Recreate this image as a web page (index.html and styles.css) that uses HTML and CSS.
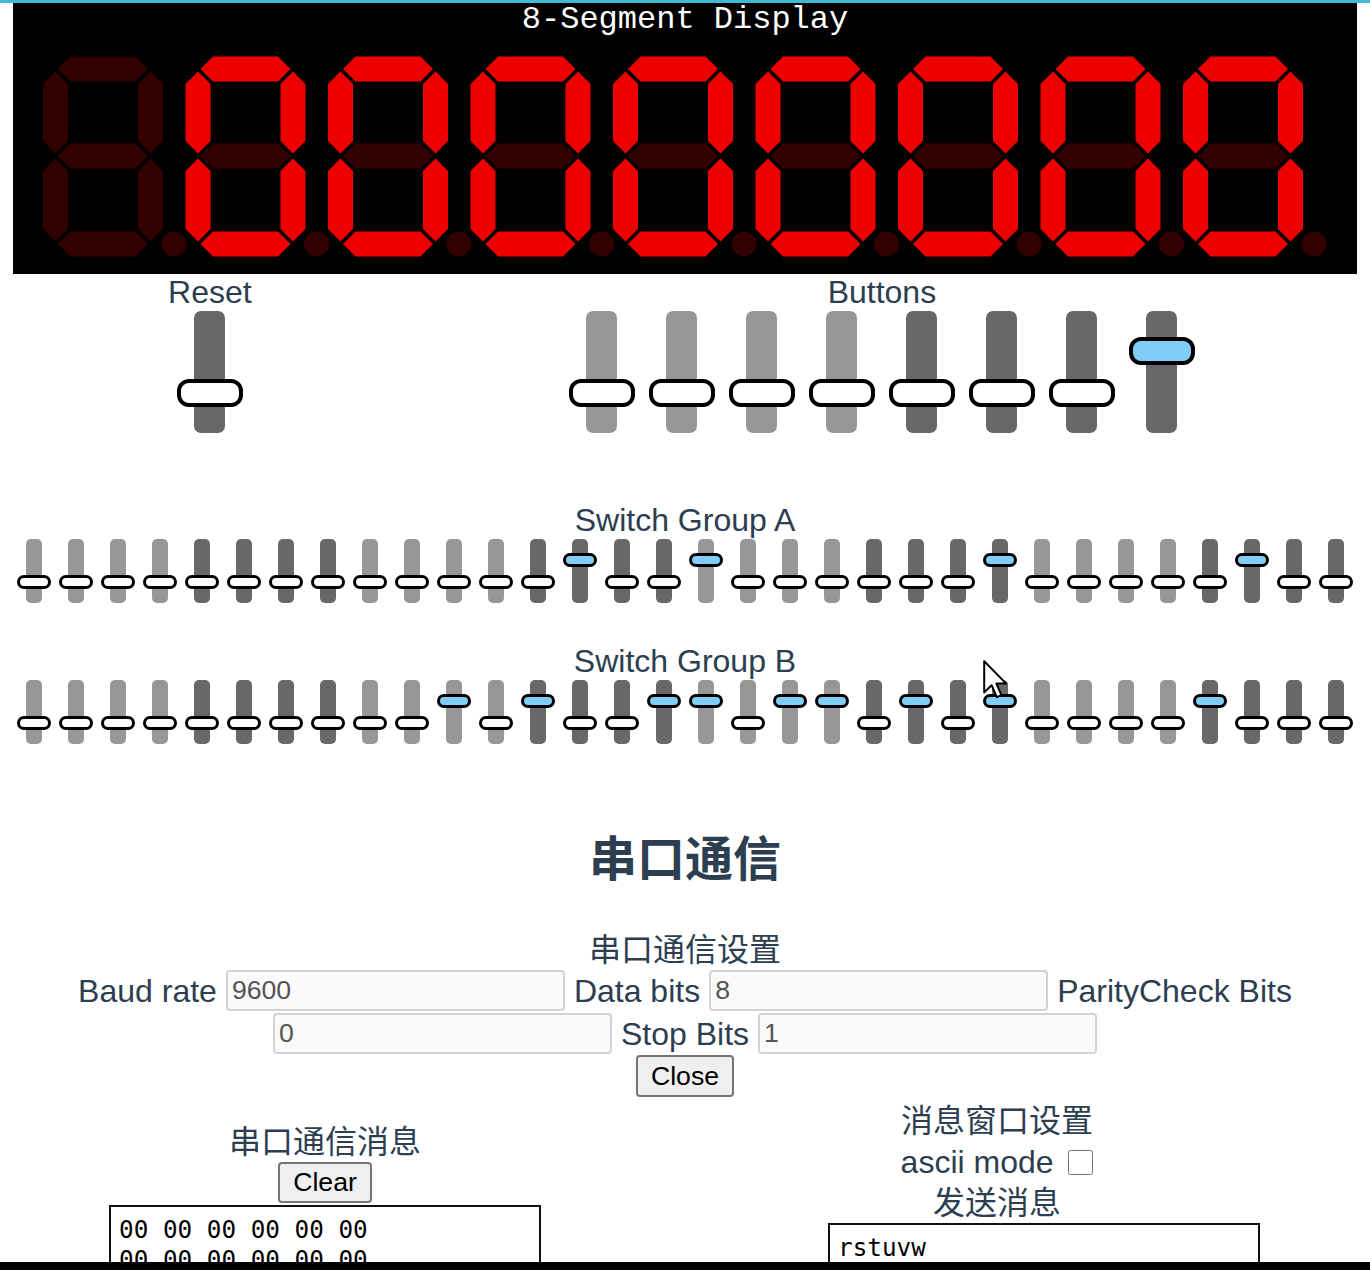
FILE: index.html
```html
<!DOCTYPE html>
<html lang="zh-CN">
<head>
<meta charset="utf-8">
<title>8-Segment Display</title>
<link rel="stylesheet" href="styles.css">
</head>
<body>
<div class="topbar"></div>
<main class="app">
  <section class="display">
    <div class="display-title">8-Segment Display</div>
    <svg class="digits" width="1344" height="239" viewBox="0 0 1344 239">
      <defs>
        <polygon id="sa" points="15,13 27.5,0.5 92.5,0.5 105,13 92.5,25.5 27.5,25.5"/>
        <polygon id="sg" points="15,100 27.5,87.5 92.5,87.5 105,100 92.5,112.5 27.5,112.5"/>
        <polygon id="sd" points="15,188 27.5,175.5 92.5,175.5 105,188 92.5,200.5 27.5,200.5"/>
        <polygon id="sf" points="12.5,15.5 25,28 25,85 12.5,97.5 0,85 0,28"/>
        <polygon id="se" points="12.5,102.5 25,115 25,173 12.5,185.5 0,173 0,115"/>
        <polygon id="sb" points="107.5,15.5 120,28 120,85 107.5,97.5 95,85 95,28"/>
        <polygon id="sc" points="107.5,102.5 120,115 120,173 107.5,185.5 95,173 95,115"/>
        <circle id="sp" cx="131" cy="188" r="12.5"/>
      </defs>
      <g transform="translate(30,21)">
        <use href="#sa" class="off"/><use href="#sb" class="off"/><use href="#sc" class="off"/><use href="#sd" class="off"/><use href="#se" class="off"/><use href="#sf" class="off"/><use href="#sg" class="off"/><use href="#sp" class="off"/>
      </g>
      <g transform="translate(172.5,21)">
        <use href="#sa" class="on"/><use href="#sb" class="on"/><use href="#sc" class="on"/><use href="#sd" class="on"/><use href="#se" class="on"/><use href="#sf" class="on"/><use href="#sg" class="off"/><use href="#sp" class="off"/>
      </g>
      <g transform="translate(315,21)">
        <use href="#sa" class="on"/><use href="#sb" class="on"/><use href="#sc" class="on"/><use href="#sd" class="on"/><use href="#se" class="on"/><use href="#sf" class="on"/><use href="#sg" class="off"/><use href="#sp" class="off"/>
      </g>
      <g transform="translate(457.5,21)">
        <use href="#sa" class="on"/><use href="#sb" class="on"/><use href="#sc" class="on"/><use href="#sd" class="on"/><use href="#se" class="on"/><use href="#sf" class="on"/><use href="#sg" class="off"/><use href="#sp" class="off"/>
      </g>
      <g transform="translate(600,21)">
        <use href="#sa" class="on"/><use href="#sb" class="on"/><use href="#sc" class="on"/><use href="#sd" class="on"/><use href="#se" class="on"/><use href="#sf" class="on"/><use href="#sg" class="off"/><use href="#sp" class="off"/>
      </g>
      <g transform="translate(742.5,21)">
        <use href="#sa" class="on"/><use href="#sb" class="on"/><use href="#sc" class="on"/><use href="#sd" class="on"/><use href="#se" class="on"/><use href="#sf" class="on"/><use href="#sg" class="off"/><use href="#sp" class="off"/>
      </g>
      <g transform="translate(885,21)">
        <use href="#sa" class="on"/><use href="#sb" class="on"/><use href="#sc" class="on"/><use href="#sd" class="on"/><use href="#se" class="on"/><use href="#sf" class="on"/><use href="#sg" class="off"/><use href="#sp" class="off"/>
      </g>
      <g transform="translate(1027.5,21)">
        <use href="#sa" class="on"/><use href="#sb" class="on"/><use href="#sc" class="on"/><use href="#sd" class="on"/><use href="#se" class="on"/><use href="#sf" class="on"/><use href="#sg" class="off"/><use href="#sp" class="off"/>
      </g>
      <g transform="translate(1170,21)">
        <use href="#sa" class="on"/><use href="#sb" class="on"/><use href="#sc" class="on"/><use href="#sd" class="on"/><use href="#se" class="on"/><use href="#sf" class="on"/><use href="#sg" class="off"/><use href="#sp" class="off"/>
      </g>
    </svg>
  </section>

  <section class="controls">
    <div class="ctl-group">
      <div class="label">Reset</div>
      <div class="slider-row">
        <div class="slider"><div class="track dark"></div><div class="knob"></div></div>
      </div>
    </div>
    <div class="ctl-group">
      <div class="label">Buttons</div>
      <div class="slider-row">
        <div class="slider"><div class="track light"></div><div class="knob"></div></div>
        <div class="slider"><div class="track light"></div><div class="knob"></div></div>
        <div class="slider"><div class="track light"></div><div class="knob"></div></div>
        <div class="slider"><div class="track light"></div><div class="knob"></div></div>
        <div class="slider"><div class="track dark"></div><div class="knob"></div></div>
        <div class="slider"><div class="track dark"></div><div class="knob"></div></div>
        <div class="slider"><div class="track dark"></div><div class="knob"></div></div>
        <div class="slider"><div class="track dark"></div><div class="knob on"></div></div>
      </div>
    </div>
  </section>

  <section class="switch-group first">
    <div class="label">Switch Group A</div>
    <div class="switches">
      <div class="switch"><div class="track light"></div><div class="knob"></div></div>
      <div class="switch"><div class="track light"></div><div class="knob"></div></div>
      <div class="switch"><div class="track light"></div><div class="knob"></div></div>
      <div class="switch"><div class="track light"></div><div class="knob"></div></div>
      <div class="switch"><div class="track dark"></div><div class="knob"></div></div>
      <div class="switch"><div class="track dark"></div><div class="knob"></div></div>
      <div class="switch"><div class="track dark"></div><div class="knob"></div></div>
      <div class="switch"><div class="track dark"></div><div class="knob"></div></div>
      <div class="switch"><div class="track light"></div><div class="knob"></div></div>
      <div class="switch"><div class="track light"></div><div class="knob"></div></div>
      <div class="switch"><div class="track light"></div><div class="knob"></div></div>
      <div class="switch"><div class="track light"></div><div class="knob"></div></div>
      <div class="switch"><div class="track dark"></div><div class="knob"></div></div>
      <div class="switch"><div class="track dark"></div><div class="knob on"></div></div>
      <div class="switch"><div class="track dark"></div><div class="knob"></div></div>
      <div class="switch"><div class="track dark"></div><div class="knob"></div></div>
      <div class="switch"><div class="track light"></div><div class="knob on"></div></div>
      <div class="switch"><div class="track light"></div><div class="knob"></div></div>
      <div class="switch"><div class="track light"></div><div class="knob"></div></div>
      <div class="switch"><div class="track light"></div><div class="knob"></div></div>
      <div class="switch"><div class="track dark"></div><div class="knob"></div></div>
      <div class="switch"><div class="track dark"></div><div class="knob"></div></div>
      <div class="switch"><div class="track dark"></div><div class="knob"></div></div>
      <div class="switch"><div class="track dark"></div><div class="knob on"></div></div>
      <div class="switch"><div class="track light"></div><div class="knob"></div></div>
      <div class="switch"><div class="track light"></div><div class="knob"></div></div>
      <div class="switch"><div class="track light"></div><div class="knob"></div></div>
      <div class="switch"><div class="track light"></div><div class="knob"></div></div>
      <div class="switch"><div class="track dark"></div><div class="knob"></div></div>
      <div class="switch"><div class="track dark"></div><div class="knob on"></div></div>
      <div class="switch"><div class="track dark"></div><div class="knob"></div></div>
      <div class="switch"><div class="track dark"></div><div class="knob"></div></div>
    </div>
  </section>

  <section class="switch-group">
    <div class="label">Switch Group B</div>
    <div class="switches">
      <div class="switch"><div class="track light"></div><div class="knob"></div></div>
      <div class="switch"><div class="track light"></div><div class="knob"></div></div>
      <div class="switch"><div class="track light"></div><div class="knob"></div></div>
      <div class="switch"><div class="track light"></div><div class="knob"></div></div>
      <div class="switch"><div class="track dark"></div><div class="knob"></div></div>
      <div class="switch"><div class="track dark"></div><div class="knob"></div></div>
      <div class="switch"><div class="track dark"></div><div class="knob"></div></div>
      <div class="switch"><div class="track dark"></div><div class="knob"></div></div>
      <div class="switch"><div class="track light"></div><div class="knob"></div></div>
      <div class="switch"><div class="track light"></div><div class="knob"></div></div>
      <div class="switch"><div class="track light"></div><div class="knob on"></div></div>
      <div class="switch"><div class="track light"></div><div class="knob"></div></div>
      <div class="switch"><div class="track dark"></div><div class="knob on"></div></div>
      <div class="switch"><div class="track dark"></div><div class="knob"></div></div>
      <div class="switch"><div class="track dark"></div><div class="knob"></div></div>
      <div class="switch"><div class="track dark"></div><div class="knob on"></div></div>
      <div class="switch"><div class="track light"></div><div class="knob on"></div></div>
      <div class="switch"><div class="track light"></div><div class="knob"></div></div>
      <div class="switch"><div class="track light"></div><div class="knob on"></div></div>
      <div class="switch"><div class="track light"></div><div class="knob on"></div></div>
      <div class="switch"><div class="track dark"></div><div class="knob"></div></div>
      <div class="switch"><div class="track dark"></div><div class="knob on"></div></div>
      <div class="switch"><div class="track dark"></div><div class="knob"></div></div>
      <div class="switch"><div class="track dark"></div><div class="knob on"></div></div>
      <div class="switch"><div class="track light"></div><div class="knob"></div></div>
      <div class="switch"><div class="track light"></div><div class="knob"></div></div>
      <div class="switch"><div class="track light"></div><div class="knob"></div></div>
      <div class="switch"><div class="track light"></div><div class="knob"></div></div>
      <div class="switch"><div class="track dark"></div><div class="knob on"></div></div>
      <div class="switch"><div class="track dark"></div><div class="knob"></div></div>
      <div class="switch"><div class="track dark"></div><div class="knob"></div></div>
      <div class="switch"><div class="track dark"></div><div class="knob"></div></div>
    </div>
  </section>

  <section class="serial">
    <h2 class="serial-title">串口通信</h2>
    <div class="settings">
      <div class="label">串口通信设置</div>
      <div class="form-row">
        <span>Baud rate</span><input class="field" value="9600" readonly>
        <span>Data bits</span><input class="field" value="8" readonly>
        <span>ParityCheck Bits</span>
      </div>
      <div class="form-row">
        <input class="field" value="0" readonly>
        <span>Stop Bits</span><input class="field" value="1" readonly>
      </div>
      <div class="form-row short">
        <button class="btn close">Close</button>
      </div>
    </div>

    <div class="io">
      <div class="io-col left">
        <div class="label">串口通信消息</div>
        <button class="btn clear">Clear</button>
        <textarea class="log" readonly>00 00 00 00 00 00
00 00 00 00 00 00
00 00 00 00 00 00</textarea>
      </div>
      <div class="io-col right">
        <div class="label">消息窗口设置</div>
        <label class="ascii">ascii mode <input type="checkbox" class="check"></label>
        <div class="label">发送消息</div>
        <textarea class="send">rstuvw</textarea>
      </div>
    </div>
  </section>
</main>

<svg class="cursor" width="26" height="40" viewBox="0 0 13 20">
  <path d="M0.6 0.6 V16.2 L4.3 12.6 L6.9 18.6 L9.2 17.6 L6.7 11.8 L11.6 11.8 Z" fill="#fff" stroke="#000" stroke-width="1" stroke-linejoin="round"/>
</svg>
<div class="bottom-band"></div>
</body>
</html>
```

FILE: styles.css
```css
* { box-sizing: border-box; }

html, body {
  margin: 0;
  padding: 0;
  background: #fff;
  overflow: hidden;
}

body {
  font-family: "Liberation Sans", Arial, "Noto Sans CJK SC", sans-serif;
  font-size: 32px;
  color: #2c3e50;
  position: relative;
  height: 1270px;
}

.topbar {
  height: 3px;
  background: #43b9d6;
}

.app {
  width: 1344px;
  margin-left: 13px;
}

/* ---------- display ---------- */
.display {
  background: #000;
  height: 271px;
}

.display-title {
  padding-top: 2px;
  font-family: "Liberation Mono", "DejaVu Sans Mono", monospace;
  font-size: 32px;
  line-height: 30px;
  color: #fff;
  text-align: center;
}

.digits { display: block; }
.digits .on { fill: #ef0000; }
.digits .off { fill: #330000; }

/* ---------- labels ---------- */
.label {
  line-height: 37px;
  text-align: center;
  white-space: nowrap;
}

/* ---------- reset / buttons ---------- */
.controls {
  display: flex;
  justify-content: space-around;
}

.ctl-group {
  display: flex;
  flex-direction: column;
  align-items: center;
}

.slider-row { display: flex; }

.slider {
  position: relative;
  width: 80px;
  height: 122px;
}

.slider .track {
  width: 31px;
  height: 122px;
  margin: 0 auto;
  border-radius: 7px;
}

.track.light { background: #979797; }
.track.dark { background: #686868; }

.slider .knob {
  position: absolute;
  left: 7px;
  top: 68px;
  width: 66px;
  height: 28px;
  border: 4px solid #000;
  border-radius: 12px;
  background: #fff;
}

.slider .knob.on {
  top: 26px;
  background: #80cdfa;
}

/* ---------- switch groups ---------- */
.switch-group { margin-top: 39px; }
.switch-group.first { margin-top: 68px; }
.switch-group .label { line-height: 38px; }

.switches { display: flex; }

.switch {
  position: relative;
  width: 42px;
  height: 64px;
}

.switch .track {
  width: 16px;
  height: 64px;
  margin: 0 auto;
  border-radius: 5px;
}

.switch .knob {
  position: absolute;
  left: 4px;
  top: 36px;
  width: 34px;
  height: 14px;
  border: 3px solid #000;
  border-radius: 7px;
  background: #fff;
}

.switch .knob.on {
  top: 14px;
  background: #80cdfa;
}

/* ---------- serial ---------- */
.serial-title {
  margin: 88px 0 0;
  font-size: 48px;
  line-height: 56px;
  font-weight: bold;
  text-align: center;
}

.settings { margin-top: 43px; }
.settings .label { line-height: 38px; }

.form-row {
  display: flex;
  justify-content: center;
  align-items: center;
  gap: 9px;
  height: 43px;
  line-height: 38px;
  white-space: nowrap;
}

.form-row.short { height: 42px; }

.field {
  width: 339px;
  height: 41px;
  margin: 0;
  padding: 0 4px;
  border: 2px solid #d3d3d3;
  border-radius: 4px;
  background: #fafafa;
  font-family: "Liberation Sans", Arial, sans-serif;
  font-size: 26.67px;
  color: #545454;
  outline: none;
}

.btn {
  margin: 0;
  padding: 0;
  border: 2px solid #767676;
  border-radius: 4px;
  background: #efefef;
  font-family: "Liberation Sans", Arial, sans-serif;
  font-size: 26.67px;
  color: #000;
  line-height: 1;
}

.btn.close { width: 98px; height: 42px; }
.btn.clear { width: 94px; height: 41px; margin-top: -1px; }

/* ---------- bottom io ---------- */
.io {
  display: grid;
  grid-template-columns: 624px 720px;
  align-items: start;
}

.io-col {
  display: flex;
  flex-direction: column;
  align-items: center;
}

.io .label { line-height: 41px; }

.io-col.left { padding-top: 25px; }
.io-col.right { padding-top: 4px; }

.ascii {
  display: flex;
  align-items: center;
  height: 41px;
  line-height: 41px;
  white-space: pre;
}

.check {
  width: 25px;
  height: 25px;
  margin: 0 0 0 6px;
}

.log, .send {
  display: block;
  width: 432px;
  margin: 0;
  padding: 8px 8px;
  border: 2px solid #111;
  border-radius: 0;
  background: #fff;
  font-family: "DejaVu Sans Mono", monospace;
  font-size: 24.3px;
  line-height: 30px;
  color: #000;
  resize: none;
  overflow: hidden;
  outline: none;
}

.log {
  height: 63px;
  margin-top: 2px;
}

.send {
  height: 46px;
  align-self: flex-start;
  margin-left: 191px;
  margin-top: -1px;
}

/* ---------- overlays ---------- */
.cursor {
  position: absolute;
  left: 983px;
  top: 660px;
}

.bottom-band {
  position: fixed;
  left: 0;
  right: 0;
  bottom: 0;
  height: 8px;
  background: #000;
}
```
